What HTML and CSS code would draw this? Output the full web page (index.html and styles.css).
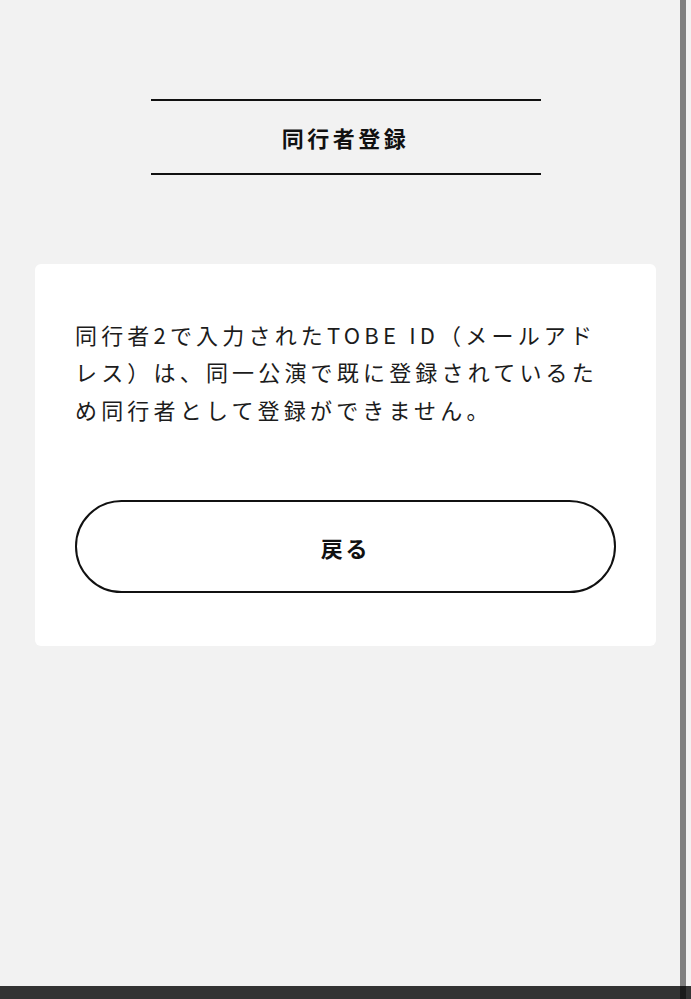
FILE: index.html
```html
<!DOCTYPE html>
<html lang="ja">
<head>
    <meta charset="UTF-8">
    <meta name="viewport" content="width=device-width, initial-scale=1.0">
    <title>同行者登録</title>
    <link rel="stylesheet" href="styles.css">
</head>
<body>
    <main class="page">
        <h1 class="page-title">同行者登録</h1>

        <section class="card">
            <p class="card-message">同行者2で入力されたTOBE ID（メールアドレス）は、同一公演で既に登録されているため同行者として登録ができません。</p>
            <a href="#" class="btn-back">戻る</a>
        </section>
    </main>

    <div class="scroll-thumb"></div>
    <div class="bottom-bar"></div>
</body>
</html>
```

FILE: styles.css
```css
html, body {
    margin: 0;
    padding: 0;
}

body {
    font-family: "Noto Sans CJK JP", "Noto Sans", sans-serif;
    background-color: #f2f2f2;
    color: #1c1c1c;
    min-height: 999px;
}

.page {
    display: flex;
    flex-direction: column;
    align-items: center;
    padding: 99px 35px 0;
}

.page-title {
    width: 390px;
    margin: 0;
    padding: 17px 0;
    border-top: 2px solid #111;
    border-bottom: 2px solid #111;
    font-size: 22px;
    line-height: 38px;
    font-weight: 700;
    letter-spacing: 0.16em;
    text-align: center;
    color: #111;
}

.card {
    align-self: stretch;
    margin-top: 89px;
    padding: 52px 40px 53px;
    background-color: #fff;
    border-radius: 6px;
    display: flex;
    flex-direction: column;
}

.card-message {
    margin: 0;
    font-size: 22px;
    line-height: 37.4px;
    letter-spacing: 0.19em;
}

.btn-back {
    margin-top: 72px;
    height: 89px;
    border: 2px solid #111;
    border-radius: 47px;
    display: flex;
    align-items: center;
    justify-content: center;
    font-size: 22px;
    font-weight: 700;
    letter-spacing: 0.12em;
    color: #111;
    text-decoration: none;
}

.scroll-thumb {
    position: fixed;
    top: 0;
    right: 5px;
    width: 6px;
    height: 999px;
    background-color: rgba(0, 0, 0, 0.47);
    z-index: 2;
}

.bottom-bar {
    position: fixed;
    left: 0;
    right: 0;
    bottom: 0;
    height: 13px;
    background-color: #333;
    z-index: 1;
}
```
